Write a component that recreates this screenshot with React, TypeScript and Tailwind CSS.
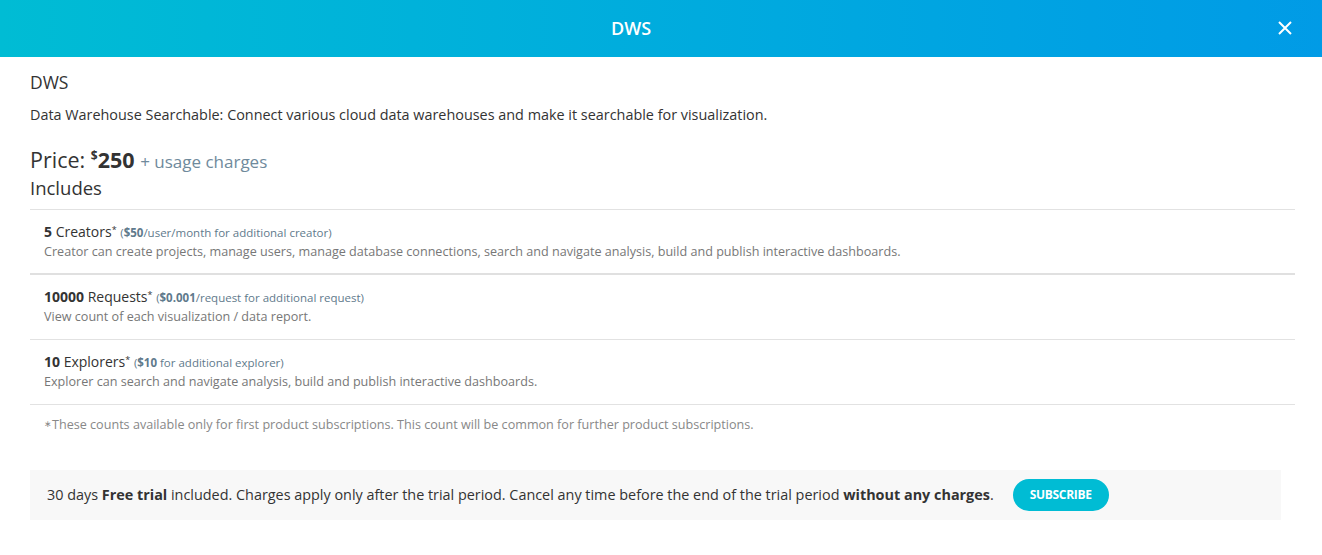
const items = [
  {
    count: "5",
    name: "Creators",
    price: "$50",
    rest: "/user/month for additional creator)",
    desc: "Creator can create projects, manage users, manage database connections, search and navigate analysis, build and publish interactive dashboards.",
  },
  {
    count: "10000",
    name: "Requests",
    price: "$0.001",
    rest: "/request for additional request)",
    desc: "View count of each visualization / data report.",
  },
  {
    count: "10",
    name: "Explorers",
    price: "$10",
    rest: " for additional explorer)",
    desc: "Explorer can search and navigate analysis, build and publish interactive dashboards.",
  },
];

const App = () => {
  return (
    <div className="w-[1322px] h-[555px] bg-white font-['Open_Sans',sans-serif] text-[#333]">
      {/* Header */}
      <div className="relative h-[57px] flex items-center justify-center pr-[60px] bg-gradient-to-r from-[#00bcd4] to-[#019be6]">
        <span className="text-white text-[18px] font-semibold">DWS</span>
        <button className="absolute right-[26px] top-[17px] text-white">
          <svg width="22" height="22" viewBox="0 0 22 22" fill="none" stroke="white" strokeWidth="2">
            <path d="M5 5 L17 17 M17 5 L5 17" />
          </svg>
        </button>
      </div>

      <div className="px-[30px] pt-[12px]">
        <h2 className="text-[17.5px] leading-[26px]">DWS</h2>
        <p className="text-[14.4px] leading-[20px] mt-[10px]">
          Data Warehouse Searchable: Connect various cloud data warehouses and make it searchable for visualization.
        </p>
        <div className="mt-[21px] text-[21.5px] leading-[28px]">
          Price: <sup className="text-[12px] font-bold top-[-0.7em]">$</sup>
          <span className="font-bold">250</span>{" "}
          <span className="text-[17px] text-[#6f8a9c]">+ usage charges</span>
        </div>
        <div className="text-[18.5px] leading-[24px]">Includes</div>

        <div className="mt-[9px] w-[1265px] border-t border-[#e2e2e2]">
          {items.map((it, i) => (
            <div
              key={it.name}
              className={
                i === 0
                  ? "px-[14px] pt-[12px] pb-[12px] border-b-2 border-[#e0e0e0]"
                  : "px-[14px] pt-[12px] pb-[13px] border-b border-[#e2e2e2]"
              }
            >
              <div className="text-[14px] leading-[20px]">
                <span className="font-bold">{it.count}</span> {it.name}
                <sup className="text-[9px]">*</sup>{" "}
                <span className="text-[11.5px] text-[#5f7a8c]">
                  (<span className="font-bold">{it.price}</span>
                  {it.rest}
                </span>
              </div>
              <div className="text-[12.6px] leading-[18px] text-[#777]">{it.desc}</div>
            </div>
          ))}
        </div>
        <p className="text-[12.6px] leading-[20px] text-[#888] px-[14px] mt-[9px]">
          <span className="text-[9px] align-[2px]">∗</span>These counts available only for first product subscriptions. This count will be common for further product subscriptions.
        </p>

        <div className="mt-[35px] w-[1251px] h-[50px] bg-[#f8f8f8] flex items-center pl-[17px]">
          <span className="text-[14.4px]">
            30 days <b>Free trial</b> included. Charges apply only after the trial period. Cancel any time before the end of the trial period <b>without any charges</b>.
          </span>
          <button className="ml-[19px] w-[96px] h-[32px] rounded-full bg-[#00bcd4] text-white text-[12px] font-bold tracking-[-0.3px]">
            SUBSCRIBE
          </button>
        </div>
      </div>
    </div>
  );
};

export default App;
